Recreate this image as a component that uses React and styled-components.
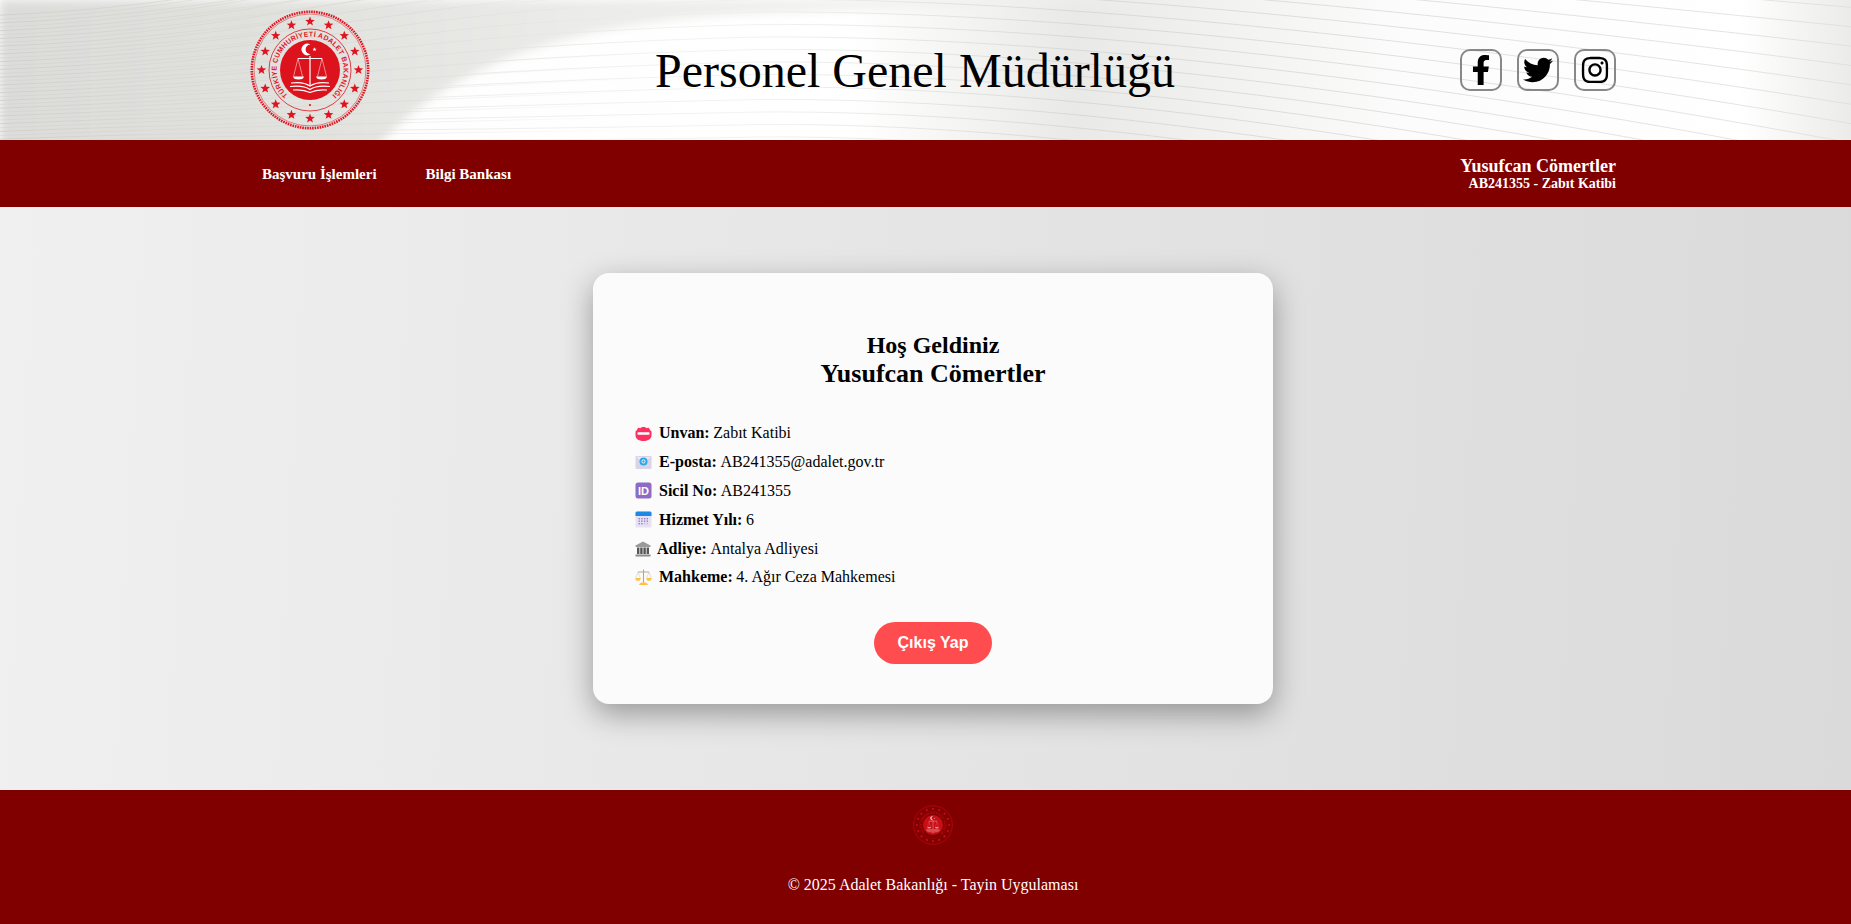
import React from 'react';
import styled, { createGlobalStyle } from 'styled-components';
import { FaFacebookF, FaTwitter, FaInstagram } from 'react-icons/fa';

const GlobalStyle = createGlobalStyle`
  html, body {
    margin: 0;
    padding: 0;
  }
  body {
    font-family: "Liberation Serif", "Times New Roman", serif;
    color: #000;
  }
`;

const Page = styled.div`
  display: flex;
  flex-direction: column;
  min-height: 924px;
`;

const Header = styled.header`
  position: relative;
  height: 140px;
  overflow: hidden;
  background: linear-gradient(
    90deg,
    #fdfdfd 0%,
    #fff 46%,
    #e9e9e7 58%,
    #fcfcfc 76%,
    #fff 94%,
    #ebebe9 100%
  );
`;

const WaveLayer = styled.svg`
  position: absolute;
  inset: 0;
  width: 100%;
  height: 100%;
`;

const HeaderInner = styled.div`
  position: relative;
  height: 100%;
  padding: 0 235px 0 250px;
  display: flex;
  align-items: center;
  justify-content: space-between;
`;

const Title = styled.h1`
  margin: 0;
  padding-top: 2px;
  font-size: 48px;
  font-weight: 400;
  line-height: 1;
`;

const Socials = styled.div`
  display: flex;
  gap: 15px;
`;

const SocialLink = styled.a`
  width: 42px;
  height: 42px;
  box-sizing: border-box;
  border: 2px solid #888;
  border-radius: 10px;
  display: flex;
  align-items: center;
  justify-content: center;
  color: #000;
  font-size: ${(p) => p.$size}px;
`;

const Nav = styled.nav`
  height: 67px;
  background: #800000;
  padding: 0 235px 0 250px;
  display: flex;
  align-items: center;
  justify-content: space-between;
  color: #fff;
`;

const NavLinks = styled.div`
  display: flex;
  gap: 49px;
  padding: 2px 0 0 12px;
`;

const NavLink = styled.a`
  font-size: 15px;
  font-weight: 700;
`;

const UserBox = styled.div`
  text-align: right;
  font-weight: 700;
`;

const UserName = styled.div`
  font-size: 18px;
  line-height: 20px;
`;

const UserRole = styled.div`
  font-size: 14px;
  line-height: 16px;
`;

const Main = styled.main`
  height: 583px;
  box-sizing: border-box;
  padding: 66px 0 0 15px;
  display: flex;
  justify-content: center;
  align-items: flex-start;
  background: linear-gradient(93deg, #f0f0f0 0%, #dadada 100%);
`;

const Card = styled.section`
  width: 680px;
  height: 431px;
  box-sizing: border-box;
  padding-top: 58px;
  background: #fbfbfb;
  border-radius: 16px;
  box-shadow: 0 10px 30px rgba(0, 0, 0, 0.35);
`;

const Greeting = styled.h2`
  margin: 0 0 31px;
  font-weight: 700;
  text-align: center;
`;

const GreetingLine = styled.span`
  display: block;
  font-size: ${(p) => p.$size}px;
  line-height: 28.5px;
`;

const InfoList = styled.ul`
  list-style: none;
  margin: 0;
  padding: 0 0 0 42px;
`;

const InfoRow = styled.li`
  display: flex;
  align-items: center;
  height: 28.8px;
  font-size: 16px;
`;

const IconSlot = styled.span`
  display: flex;
  flex: none;
  margin-right: ${(p) => p.$gap || 7}px;
`;

const Label = styled.b`
  margin-right: 3.6px;
`;

const LogoutRow = styled.div`
  display: flex;
  justify-content: center;
  margin-top: 30px;
`;

const LogoutButton = styled.button`
  width: 118px;
  height: 42px;
  border: 0;
  border-radius: 21px;
  background: #ff4d4f;
  color: #fff;
  font-family: "Liberation Sans", Arial, sans-serif;
  font-size: 16px;
  font-weight: 700;
`;

const Footer = styled.footer`
  height: 134px;
  box-sizing: border-box;
  padding: 15px 0 0 15px;
  background: #800000;
  color: #fff;
  display: flex;
  flex-direction: column;
  align-items: center;
`;

const FooterText = styled.p`
  margin: 30px 0 0;
  font-size: 16px;
  font-weight: 400;
  line-height: 20px;
`;

const FooterLogo = styled.div`
  height: 40px;
  opacity: 0.8;
`;

// header background: gray sweep on the left, lines arcing over the whole width
function Waves() {
  const lines = [];
  for (let i = -7; i < 14; i++) {
    const peak = 12 + 12.5 * i;
    const left = 62 + peak * 0.62;
    const right = 105 + peak * 1.55;
    lines.push(
      <path
        key={i}
        d={`M0 ${left} C 260 ${left - 10}, 480 ${peak + 6}, 760 ${peak} C 1050 ${peak - 2}, 1450 ${peak + 42 + i}, 1851 ${right}`}
        fill="none"
        stroke="url(#waveStroke)"
        strokeOpacity="0.75"
      />,
    );
    lines.push(
      <path
        key={`b${i}`}
        d={`M0 ${left + 4} C 260 ${left - 6}, 440 ${peak + 10}, 640 ${peak + 5}`}
        fill="none"
        stroke="url(#waveFade)"
      />,
    );
  }
  return (
    <WaveLayer viewBox="0 0 1851 140" preserveAspectRatio="none">
      <defs>
        <linearGradient id="sweep" gradientUnits="userSpaceOnUse" x1="0" y1="0" x2="1100" y2="0">
          <stop offset="0" stopColor="#dcdcd9" />
          <stop offset="0.3" stopColor="#e2e2df" />
          <stop offset="0.55" stopColor="#ececea" />
          <stop offset="1" stopColor="#f2f2f0" />
        </linearGradient>
        <linearGradient id="waveStroke" gradientUnits="userSpaceOnUse" x1="0" y1="0" x2="1851" y2="0">
          <stop offset="0" stopColor="#cbcbc7" />
          <stop offset="0.25" stopColor="#e8e8e6" />
          <stop offset="0.4" stopColor="#eeeeee" />
          <stop offset="0.58" stopColor="#d2d2ce" />
          <stop offset="1" stopColor="#dcdcda" />
        </linearGradient>
        <linearGradient id="waveFade" gradientUnits="userSpaceOnUse" x1="0" y1="0" x2="640" y2="0">
          <stop offset="0" stopColor="#cfcfcb" stopOpacity="0.5" />
          <stop offset="0.6" stopColor="#cfcfcb" stopOpacity="0.35" />
          <stop offset="1" stopColor="#cfcfcb" stopOpacity="0" />
        </linearGradient>
        <filter id="soft" x="-5%" y="-5%" width="110%" height="110%">
          <feGaussianBlur stdDeviation="5" />
        </filter>
      </defs>
      <path
        d="M0 0 H1180 C 1000 6, 860 8, 740 14 C 560 24, 440 70, 375 150 H0 Z"
        fill="url(#sweep)"
        filter="url(#soft)"
      />
      {lines}
    </WaveLayer>
  );
}

const starPath = (cx, cy, r) => {
  let d = '';
  for (let i = 0; i < 10; i++) {
    const a = (Math.PI / 5) * i - Math.PI / 2;
    const rad = i % 2 ? r * 0.42 : r;
    d += `${i ? 'L' : 'M'}${(cx + rad * Math.cos(a)).toFixed(2)} ${(cy + rad * Math.sin(a)).toFixed(2)}`;
  }
  return d + 'Z';
};

function Emblem({ size, id }) {
  const stars = [];
  for (let i = 0; i < 16; i++) {
    const a = (i * Math.PI) / 8;
    stars.push(
      <path key={i} d={starPath(60 + 48.5 * Math.sin(a), 60 - 48.5 * Math.cos(a), 5)} fill="#e0141f" />,
    );
  }
  return (
    <svg width={size} height={size} viewBox="0 0 120 120">
      <defs>
        <path id={id} d="M38.500 85.700 A 33.500 33.500 0 1 1 81.500 85.700" />
      </defs>
      <circle cx="60" cy="60" r="58.2" fill="none" stroke="#e0141f" strokeWidth="2.6" strokeDasharray="1.6 0.9" />
      <circle cx="60" cy="60" r="56" fill="none" stroke="#e0141f" strokeWidth="0.5" />
      {stars}
      <circle cx="60" cy="60" r="41" fill="none" stroke="#e0141f" strokeWidth="0.8" />
      <text fill="#e0141f" fontFamily="Liberation Sans, Arial, sans-serif" fontSize="7" fontWeight="700">
        <textPath href={`#${id}`} startOffset="50%" textAnchor="middle" textLength="162">
          TÜRKİYE CUMHURİYETİ ADALET BAKANLIĞI
        </textPath>
      </text>
      <circle cx="60" cy="60" r="30" fill="#dc131c" />
      <path d="M60.5 34.500a5.800 5.800 0 1 0 0 9.800 4.800 4.800 0 1 1 0-9.800z" fill="#fff" />
      <path d={starPath(64.5, 39.4, 2.2)} fill="#fff" />
      <path d="M48 48.500h24M60 46v30" stroke="#fff" strokeWidth="1.2" fill="none" />
      <path d="M48 48.500l-4.500 18M48 48.500l4.500 18M72 48.500l-4.500 18M72 48.500l4.500 18" stroke="#fff" strokeWidth="0.5" fill="none" />
      <path d="M43 66.500h11c-.6 2.400-2.600 3-5.500 3s-4.900-.6-5.500-3zM66 66.500h11c-.6 2.400-2.600 3-5.500 3s-4.900-.6-5.500-3z" fill="#fff" />
      <path d="M41 73c7-1 14-.5 19 3 5-3.500 12-4 19-3M40 76.500c8-1 15-.5 20 3 5-3.500 12-4 20-3M43 80c6-.6 12 0 17 2.500 5-2.500 11-3.100 17-2.500" stroke="#fff" strokeWidth="1.2" fill="none" />
      <circle cx="60" cy="95" r="1.1" fill="#e0141f" />
    </svg>
  );
}

const BadgeIcon = () => (
  <svg width="17" height="17" viewBox="0 0 17 17">
    <path d="M.5 7c0-1 1-1.500 1.500-2 .5-.8.800-2.400 1.800-2.200.8.100 1 .8 1.700.3C6.200 2.500 6.800 2 8.500 2s2.300.5 3 1.100c.7.500.9-.2 1.700-.3 1-.2 1.300 1.400 1.800 2.200.5.500 1.500 1 1.500 2v3.500c0 3-3 5.500-8 5.500s-8-2.500-8-5.500z" fill="#ff2f62" />
    <rect x="2.500" y="7.300" width="12" height="2.400" rx="0.6" fill="#fff" />
  </svg>
);

const MailIcon = () => (
  <svg width="17" height="17" viewBox="0 0 17 17">
    <rect x="0.500" y="2" width="16" height="13" rx="1" fill="#d9d4e6" />
    <path d="M.5 3l8 6.500 8-6.500" fill="#ebe8f2" stroke="#c9c3da" strokeWidth="0.5" />
    <circle cx="8.500" cy="7.500" r="4" fill="#29a8f0" />
    <circle cx="8.500" cy="7.500" r="1.600" fill="none" stroke="#fff" strokeWidth="0.9" />
  </svg>
);

const IdIcon = () => (
  <svg width="17" height="17" viewBox="0 0 17 17">
    <rect x="0.500" y="0.500" width="16" height="16" rx="2.500" fill="#8e6cc4" />
    <text x="8.500" y="12.500" textAnchor="middle" fill="#fff" fontFamily="Liberation Sans, Arial, sans-serif" fontSize="11" fontWeight="700">ID</text>
  </svg>
);

const CalendarIcon = () => {
  const dots = [];
  for (let r = 0; r < 3; r++) {
    for (let c = 0; c < 4; c++) {
      dots.push(<rect key={`${r}-${c}`} x={3.500 + c * 2.700} y={7 + r * 2.500} width="1.400" height="1.400" fill={r === 2 && c > 1 ? '#c4bce0' : '#8d80c4'} />);
    }
  }
  return (
    <svg width="17" height="17" viewBox="0 0 17 17">
      <rect x="0.500" y="0.500" width="16" height="16" rx="1.500" fill="#e6e2f3" />
      <path d="M.5 5V2A1.500 1.500 0 0 1 2 .5h13A1.500 1.500 0 0 1 16.500 2v3z" fill="#1e88e5" />
      {dots}
    </svg>
  );
};

const CourthouseIcon = () => (
  <svg width="16" height="16" viewBox="0 0 16 16">
    <path d="M8 .5L.5 4.500v1.500h15V4.500z" fill="#9a9a9a" />
    <rect x="2" y="6.500" width="2.400" height="6.500" fill="#555" />
    <rect x="5.200" y="6.500" width="2.400" height="6.500" fill="#555" />
    <rect x="8.400" y="6.500" width="2.400" height="6.500" fill="#555" />
    <rect x="11.600" y="6.500" width="2.400" height="6.500" fill="#555" />
    <rect x="0.500" y="13.500" width="15" height="2" fill="#8c8c8c" />
  </svg>
);

const ScalesIcon = () => (
  <svg width="17" height="17" viewBox="0 0 17 17">
    <path d="M8.500 .5v13M3 3h11" stroke="#b5a98c" strokeWidth="1.100" fill="none" />
    <path d="M3 3L.7 9M3 3l2.300 6M14 3l-2.300 6M14 3l2.300 6" stroke="#c9c2b0" strokeWidth="0.500" fill="none" />
    <path d="M.3 9h5.400c0 2-1.100 2.800-2.700 2.800S.3 11 .3 9zM11.300 9h5.400c0 2-1.100 2.800-2.700 2.800s-2.700-.8-2.700-2.800z" fill="#ffc046" />
    <path d="M4 16c.5-2 2.200-2.800 4.500-2.800S12.500 14 13 16z" fill="#ffc046" />
  </svg>
);

const infoRows = [
  { label: 'Unvan:', value: 'Zabıt Katibi', Icon: BadgeIcon },
  { label: 'E-posta:', value: 'AB241355@adalet.gov.tr', Icon: MailIcon },
  { label: 'Sicil No:', value: 'AB241355', Icon: IdIcon },
  { label: 'Hizmet Yılı:', value: '6', Icon: CalendarIcon },
  { label: 'Adliye:', value: 'Antalya Adliyesi', Icon: CourthouseIcon, gap: 6 },
  { label: 'Mahkeme:', value: '4. Ağır Ceza Mahkemesi', Icon: ScalesIcon },
];

export default function App() {
  return (
    <Page>
      <GlobalStyle />
      <Header>
        <Waves />
        <HeaderInner>
          <Emblem size={120} id="emblem-top" />
          <Title>Personel Genel Müdürlüğü</Title>
          <Socials>
            <SocialLink $size={30}><FaFacebookF /></SocialLink>
            <SocialLink $size={30}><FaTwitter /></SocialLink>
            <SocialLink $size={30}><FaInstagram /></SocialLink>
          </Socials>
        </HeaderInner>
      </Header>
      <Nav>
        <NavLinks>
          <NavLink>Başvuru İşlemleri</NavLink>
          <NavLink>Bilgi Bankası</NavLink>
        </NavLinks>
        <UserBox>
          <UserName>Yusufcan Cömertler</UserName>
          <UserRole>AB241355 - Zabıt Katibi</UserRole>
        </UserBox>
      </Nav>
      <Main>
        <Card>
          <Greeting>
            <GreetingLine $size={24}>Hoş Geldiniz</GreetingLine>
            <GreetingLine $size={26}>Yusufcan Cömertler</GreetingLine>
          </Greeting>
          <InfoList>
            {infoRows.map(({ label, value, Icon, gap }) => (
              <InfoRow key={label}>
                <IconSlot $gap={gap}><Icon /></IconSlot>
                <Label>{label}</Label>
                {value}
              </InfoRow>
            ))}
          </InfoList>
          <LogoutRow>
            <LogoutButton>Çıkış Yap</LogoutButton>
          </LogoutRow>
        </Card>
      </Main>
      <Footer>
        <FooterLogo><Emblem size={40} id="emblem-bottom" /></FooterLogo>
        <FooterText>© 2025 Adalet Bakanlığı - Tayin Uygulaması</FooterText>
      </Footer>
    </Page>
  );
}
